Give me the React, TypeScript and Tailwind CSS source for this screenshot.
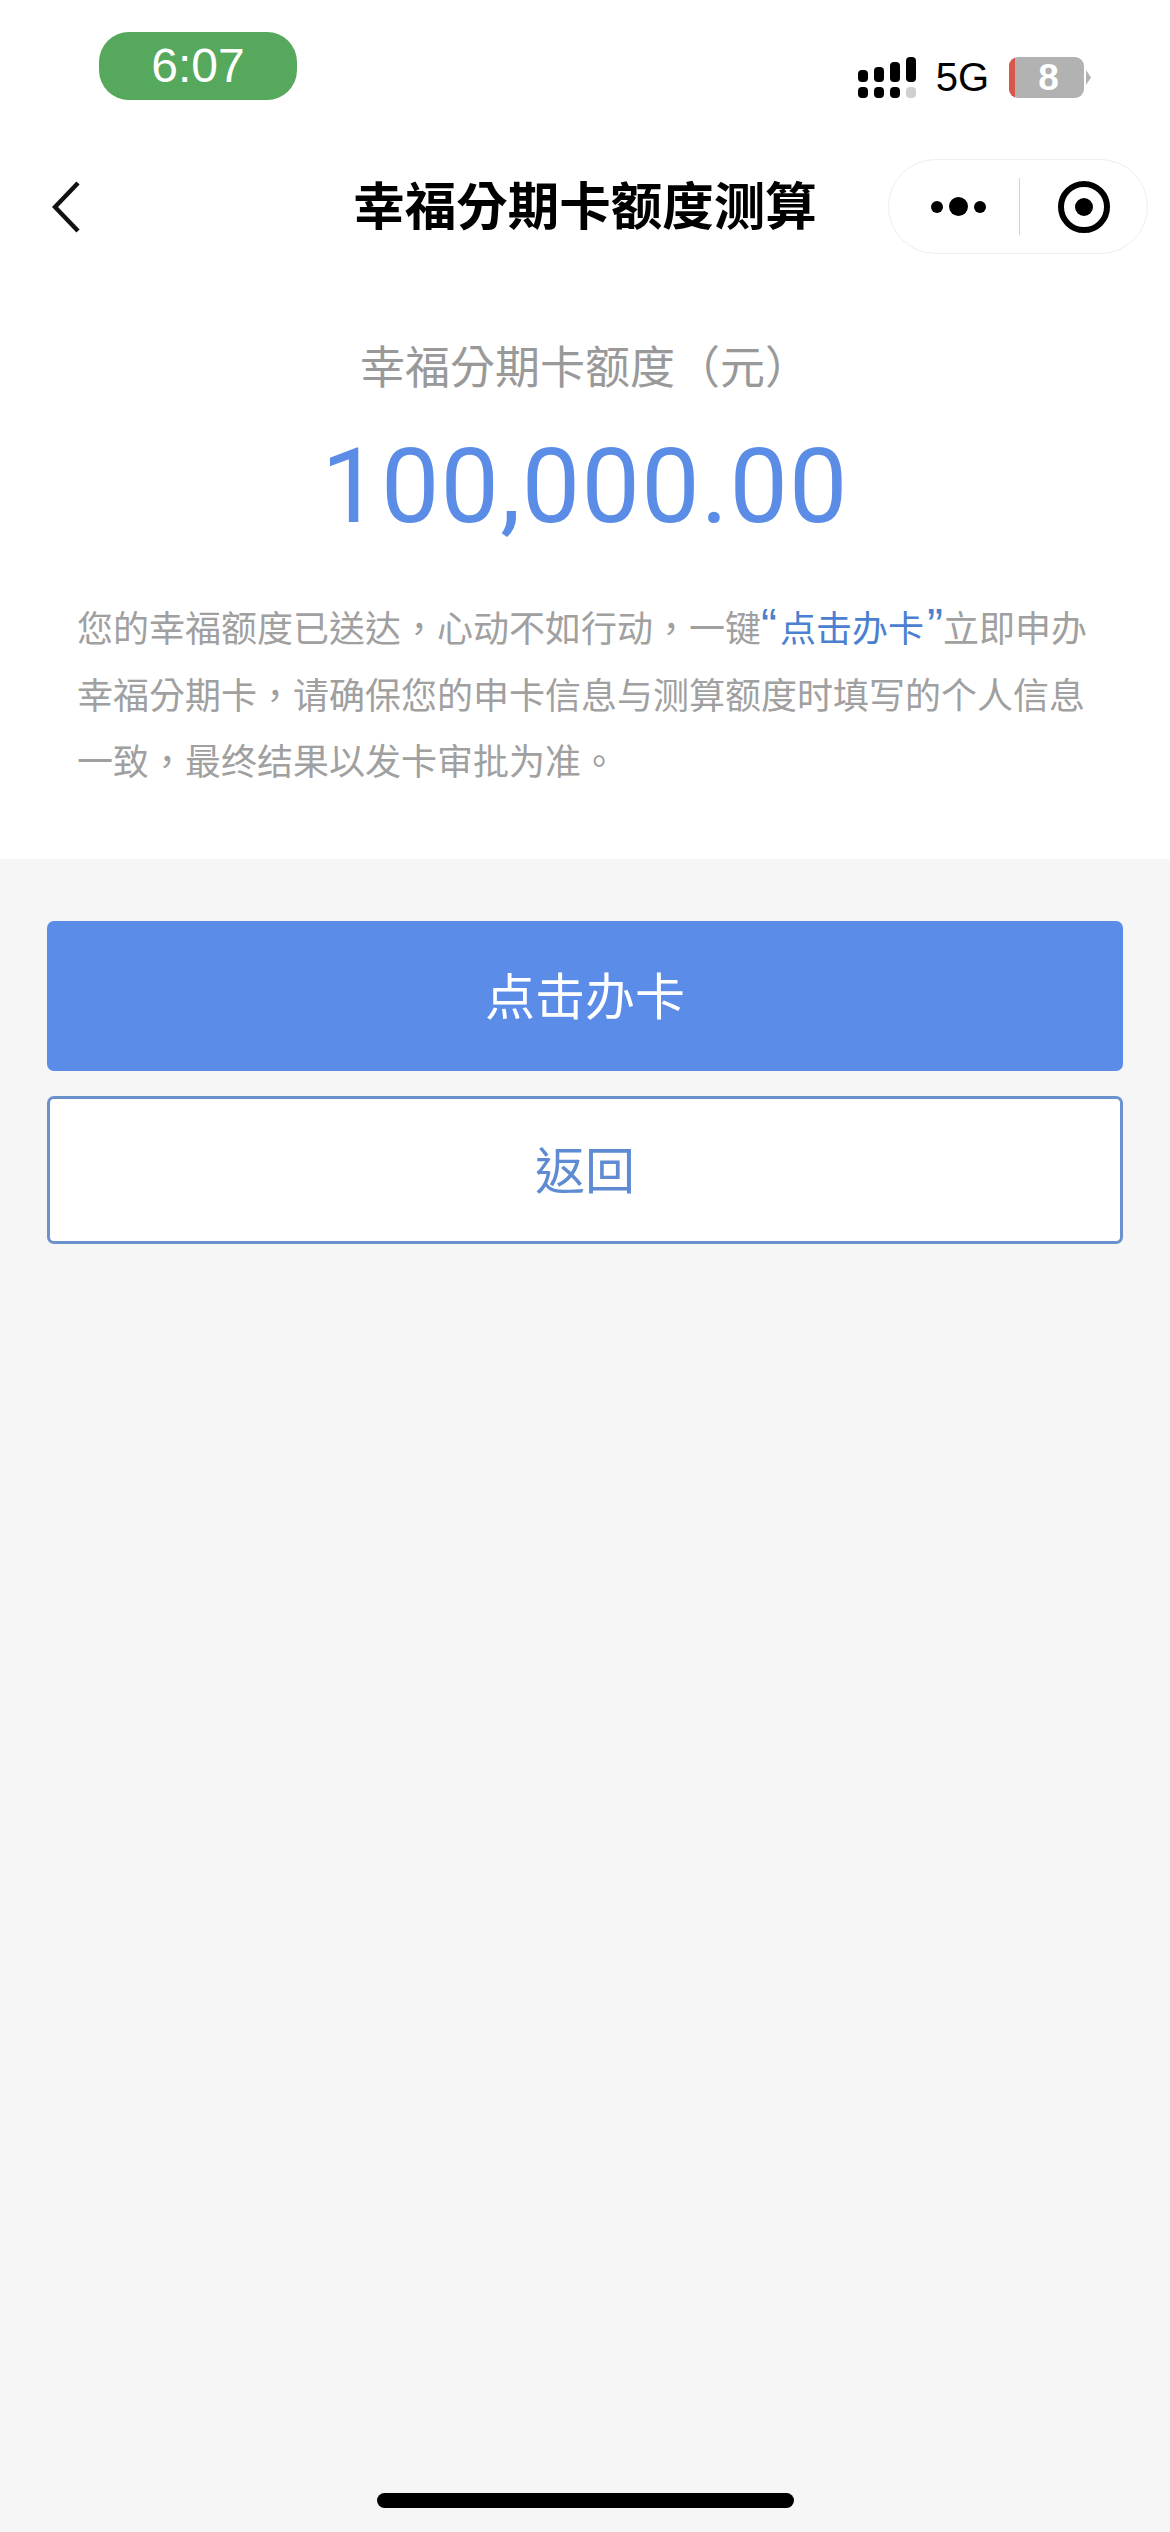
const cjk = "font-['Liberation_Sans','Noto_Sans_CJK_TC',sans-serif]";

function Signal() {
  return (
    <svg width="58" height="41" viewBox="0 0 58 41" fill="#000">
      <rect x="0" y="13" width="10" height="12" rx="4" />
      <rect x="16" y="10" width="10" height="15" rx="4" />
      <rect x="32" y="5" width="10" height="20" rx="4" />
      <rect x="48" y="0" width="10" height="25" rx="4" />
      <rect x="0" y="30" width="10" height="11" rx="4" />
      <rect x="16" y="30" width="10" height="11" rx="4" />
      <rect x="32" y="30" width="10" height="11" rx="4" />
      <rect x="48" y="30" width="10" height="11" rx="4" fill="#cfcfcf" />
    </svg>
  );
}

function Battery() {
  return (
    <div className="flex items-center gap-[2px]">
      <div className="w-[75px] h-[41px] rounded-[9px] bg-[#b2b2b2] overflow-hidden flex">
        <div className="w-[6px] bg-[#d9574a]" />
        <div className="flex-1 pr-[2px] text-center text-white font-bold text-[37px] leading-[41px] font-['Liberation_Sans',sans-serif]">8</div>
      </div>
      <svg width="5" height="15" viewBox="0 0 5 15" fill="#b2b2b2">
        <path d="M0 0 L5 7.5 L0 15 Z" />
      </svg>
    </div>
  );
}

export default function App() {
  return (
    <div lang="zh-TW" className={`flex flex-col w-[1170px] h-[2532px] bg-[#f6f6f6] ${cjk}`}>
      <div className="bg-white">
        {/* status bar */}
        <div className="flex items-start justify-between h-[159px] pt-[32px] pl-[99px] pr-[79px]">
          <div className="w-[198px] h-[68px] rounded-[30px] bg-[#55a85c] text-white text-[48px] leading-[68px] text-center">6:07</div>
          <div className="flex items-center mt-[25px]">
            <Signal />
            <span className="ml-[20px] text-[40px] leading-[41px] text-black">5G</span>
            <span className="ml-[20px]">
              <Battery />
            </span>
          </div>
        </div>

        {/* nav bar */}
        <div className="grid grid-cols-[1fr_auto_1fr] items-center h-[95px] px-[22px]">
          <svg className="ml-[30px]" width="28" height="52" viewBox="0 0 28 52" fill="none" stroke="#111" strokeWidth="4.5">
            <path d="M26 2 L3 26 L26 50" />
          </svg>
          <h1 className="pt-[2px] text-[51.5px] leading-[93px] font-bold text-black">幸福分期卡额度测算</h1>
          <div className="justify-self-end flex items-center w-[260px] h-[95px] rounded-full border border-[#eeeeee] bg-white">
            <div className="flex items-center justify-center gap-[6px] w-[130px] pl-[8px]">
              <span className="w-[12px] h-[12px] rounded-full bg-black" />
              <span className="w-[19px] h-[19px] rounded-full bg-black" />
              <span className="w-[12px] h-[12px] rounded-full bg-black" />
            </div>
            <div className="w-[1px] h-[57px] bg-[#d4d4d4]" />
            <div className="flex-1 flex justify-center">
              <div className="flex items-center justify-center w-[52px] h-[52px] rounded-full border-[6px] border-black">
                <div className="w-[18px] h-[18px] rounded-full bg-black" />
              </div>
            </div>
          </div>
        </div>

        {/* amount */}
        <div className="pt-[85px] pb-[62px]">
          <p className="text-center text-[45px] leading-[60px] text-[#999999]">幸福分期卡额度（元）</p>
          <p className="mt-[28px] text-center text-[104px] leading-[120px] tracking-[1.2px] font-['Roboto',sans-serif] text-[#5b8de6]">100,000.00</p>
          <p className="mt-[50px] px-[77px] text-[36px] leading-[66.5px] text-[#a0a0a0]">
            您的幸福额度已送达，心动不如行动，一键<span className="text-[#4a80cf]"><span className="pr-[3px] text-[48px] leading-[0px]">“</span>点击办卡<span className="pl-[3px] text-[48px] leading-[0px]">”</span></span>立即申办幸福分期卡，请确保您的申卡信息与测算额度时填写的个人信息一致，最终结果以发卡审批为准。
          </p>
        </div>
      </div>

      {/* buttons */}
      <div className="flex flex-col gap-[25px] mt-[62px] px-[47px]">
        <button type="button" className="h-[150px] pt-[5px] rounded-[7px] bg-[#5b8ce8] text-white text-[50px]">
          点击办卡
        </button>
        <button type="button" className="h-[148px] pt-[6px] rounded-[7px] border-[3px] border-[#6b91cf] bg-white text-[#5f8bd3] text-[50px]">
          返回
        </button>
      </div>

      {/* home indicator */}
      <div className="mt-auto flex justify-center pb-[24px]">
        <div className="w-[417px] h-[15px] rounded-full bg-black" />
      </div>
    </div>
  );
}
